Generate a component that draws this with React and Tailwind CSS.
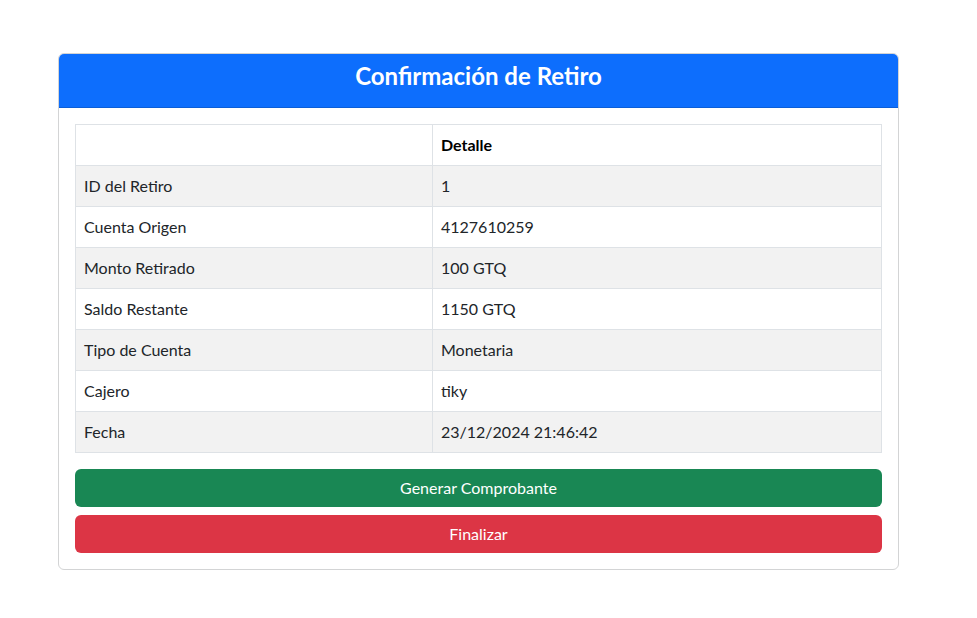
import React from "react";

const rows = [
  ["ID del Retiro", "1"],
  ["Cuenta Origen", "4127610259"],
  ["Monto Retirado", "100 GTQ"],
  ["Saldo Restante", "1150 GTQ"],
  ["Tipo de Cuenta", "Monetaria"],
  ["Cajero", "tiky"],
  ["Fecha", "23/12/2024 21:46:42"],
];

export default function App() {
  return (
    <div
      className="min-h-[618px] bg-white pt-[53px] pl-[58px] text-[#212529]"
      style={{ fontFamily: '"Segoe UI", Lato, "Liberation Sans", sans-serif' }}
    >
      <div className="w-[841px] rounded-[6px] border border-[#d3d4d5] overflow-hidden">
        <div className="bg-[#0d6efd] border-b border-[#0b5ed7] px-4 pt-2 pb-2 text-center text-white">
          <h3 className="mb-2 text-[24px] leading-[1.2] font-bold">Confirmación de Retiro</h3>
        </div>
        <div className="p-4">
          <table className="w-full border-collapse border border-[#dee2e6] text-[16px] leading-6 mb-4">
            <thead>
              <tr>
                <th className="w-[357px] border border-[#dee2e6] px-2 py-2 text-left font-bold"></th>
                <th className="border border-[#dee2e6] px-2 py-2 text-left font-bold text-black">Detalle</th>
              </tr>
            </thead>
            <tbody>
              {rows.map(([k, v], i) => (
                <tr key={k} className={i % 2 === 0 ? "bg-[#f2f2f2]" : "bg-white"}>
                  <td className="border border-[#dee2e6] px-2 py-2">{k}</td>
                  <td className="border border-[#dee2e6] px-2 py-2">{v}</td>
                </tr>
              ))}
            </tbody>
          </table>
          <div className="flex flex-col gap-2">
            <button className="h-[38px] w-full rounded-[6px] bg-[#198754] text-[16px] text-white">
              Generar Comprobante
            </button>
            <button className="h-[38px] w-full rounded-[6px] bg-[#dc3545] text-[16px] text-white">
              Finalizar
            </button>
          </div>
        </div>
      </div>
    </div>
  );
}
